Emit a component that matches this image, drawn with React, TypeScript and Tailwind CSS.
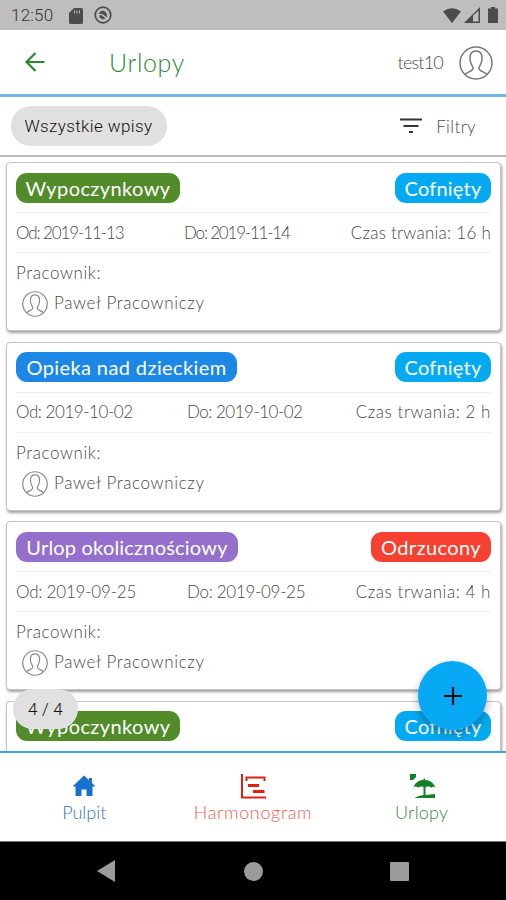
import React from 'react';
import clsx from 'clsx';

interface Leave {
  type: string;
  typeClass: string;
  status: string;
  statusClass: string;
  from: string;
  to: string;
  fromClass: string;
  toClass: string;
  hours: number;
  hoursClass: string;
  employee: string;
}

const leaves: Leave[] = [
  {
    type: 'Wypoczynkowy',
    typeClass: 'w-[164px] bg-[#528b2a] tracking-[0.4px]',
    status: 'Cofnięty',
    statusClass: 'w-24 bg-[#04aaf1] tracking-[0.2px]',
    from: '2019-11-13',
    to: '2019-11-14',
    fromClass: 'w-[168px] tracking-[-1.1px]',
    toClass: 'tracking-[-1.2px]',
    hours: 16,
    hoursClass: 'tracking-[0.25px]',
    employee: 'Paweł Pracowniczy',
  },
  {
    type: 'Opieka nad dzieckiem',
    typeClass: 'w-[221px] bg-[#1c87e5] tracking-[0.4px]',
    status: 'Cofnięty',
    statusClass: 'w-24 bg-[#04aaf1] tracking-[0.2px]',
    from: '2019-10-02',
    to: '2019-10-02',
    fromClass: 'w-[171px] tracking-[-0.45px]',
    toClass: 'tracking-[-0.5px]',
    hours: 2,
    hoursClass: 'tracking-[0.55px]',
    employee: 'Paweł Pracowniczy',
  },
  {
    type: 'Urlop okolicznościowy',
    typeClass: 'w-[222px] bg-[#9470cc] tracking-[0.2px]',
    status: 'Odrzucony',
    statusClass: 'w-[120px] bg-[#f54032] tracking-[0.4px]',
    from: '2019-09-25',
    to: '2019-09-25',
    fromClass: 'w-[171px] tracking-[-0.2px]',
    toClass: 'tracking-[-0.3px]',
    hours: 4,
    hoursClass: 'tracking-[0.55px]',
    employee: 'Paweł Pracowniczy',
  },
];

// Only the header row of this one is in view above the bottom navigation
const nextLeave = leaves[0];

const Avatar: React.FC<{ className?: string }> = ({ className }) => (
  <svg viewBox="0 0 34 34" fill="none" stroke="currentColor" strokeWidth="1.5" className={className}>
    <circle cx="17" cy="17" r="16" />
    <path d="M6 28.500c1-1.500 3-2.300 5.200-3.200 2-.8 2.800-1.500 2.800-3.300 0-1-.4-1.500-1.100-2.700-1.300-2-1.900-4.300-1.900-7.300 0-4.500 2.200-7 6-7s6 2.500 6 7c0 3-.6 5.300-1.900 7.300-.7 1.200-1.100 1.700-1.100 2.700 0 1.800.8 2.500 2.800 3.300 2.200.9 4.200 1.700 5.200 3.200" />
  </svg>
);

const StatusBar: React.FC = () => (
  <div className="flex h-[30px] shrink-0 items-center bg-[#bebebe] pl-[11px] pr-2 text-[#4c4c4c]">
    <span className="w-[58px] pt-[2px] font-[Roboto] text-[17px] font-light tracking-[0.2px] text-[#333]">12:50</span>
    <svg viewBox="0 0 14 16" className="mt-px h-4 w-3.5" fill="currentColor">
      <path d="M5 0h7.500Q14 0 14 1.500v13q0 1.500-1.500 1.500h-11Q0 16 0 14.500V5z" />
      <path d="M5.500 2.500v3M8 2.500v3M10.500 2.500v3" stroke="#bebebe" strokeWidth="1" />
    </svg>
    <svg viewBox="0 0 18 18" className="ml-[11px] h-[18px] w-[18px]" fill="none" stroke="currentColor">
      <circle cx="9" cy="9" r="7.800" strokeWidth="1.700" />
      <path d="M4.800 7.500C6 4.500 9.500 4 11.500 6c1.500 1.500 1.800 3.500 1.300 5.500L9 8.300zM5 9.800l2.500-.8 4 3.800C9 14 6 13 5 9.800z" fill="currentColor" stroke="none" />
    </svg>
    <svg viewBox="0 0 18 15" className="ml-auto h-[15px] w-[18px]" fill="currentColor">
      <path d="M0 3.500Q9-3 18 3.500L9 15z" />
    </svg>
    <svg viewBox="0 0 16 16" className="ml-[3px] h-4 w-4" fill="currentColor">
      <path fillRule="evenodd" d="M0 16 16 0v16zM9 8.800v5.700h5.500V3.500z" />
    </svg>
    <svg viewBox="0 0 10 16" className="ml-[8px] h-4 w-2.5" fill="currentColor">
      <path d="M3 0h4v1.500h3V16H0V1.500h3z" />
    </svg>
  </div>
);

const LeaveHeader: React.FC<{ leave: Leave }> = ({ leave }) => (
  <div className="flex h-[50px] shrink-0 items-center justify-between border-b border-[#eeeeee] text-[20px] text-white">
    <span className={clsx('flex h-[30px] items-center justify-center whitespace-nowrap rounded-[11px]', leave.typeClass)}>
      {leave.type}
    </span>
    <span className={clsx('flex h-[30px] items-center justify-center whitespace-nowrap rounded-[11px]', leave.statusClass)}>
      {leave.status}
    </span>
  </div>
);

const cardClass = 'shrink-0 border-[#c4c4c4] bg-white px-[9px] shadow-[1px_2px_3px_rgba(0,0,0,0.38)]';

const LeaveCard: React.FC<{ leave: Leave }> = ({ leave }) => (
  <div className={clsx('h-[169px] rounded-[4px] border', cardClass)}>
    <LeaveHeader leave={leave} />
    <div className="flex h-10 items-center whitespace-nowrap border-b border-[#f0f0f0] text-[17px] font-light text-[#4a4a4a]">
      <span className={leave.fromClass}>Od: {leave.from}</span>
      <span className={leave.toClass}>Do: {leave.to}</span>
      <span className={clsx('ml-auto', leave.hoursClass)}>Czas trwania: {leave.hours} h</span>
    </div>
    <div className="pt-2 text-[17px] font-light text-[#4a4a4a]">
      <p className="leading-6 tracking-[0.6px]">Pracownik:</p>
      <div className="mt-1.5 flex h-6 items-center gap-[6px] pl-[6px]">
        <Avatar className="mt-0.5 h-[26px] w-[26px] text-[#888]" />
        <span className="tracking-[0.65px]">{leave.employee}</span>
      </div>
    </div>
  </div>
);

const BottomNav: React.FC = () => (
  <nav className="flex h-[90px] shrink-0 border-t-2 border-[#3da5da] bg-white pt-[21px] text-[18px] font-light leading-6">
    <div className="flex flex-1 flex-col items-center text-[#3472cb]">
      <svg viewBox="0 0 24 26" className="h-[26px] w-6" fill="#1871cc">
        <path d="M12 1.500 .5 12.500H3.500V22H9.500v-6.500h5V22h6v-9.500h3L20 9V4h-3v2z" />
      </svg>
      <span>Pulpit</span>
    </div>
    <div className="flex flex-1 flex-col items-center text-[#f1604f]">
      <svg viewBox="0 0 26 26" className="h-[26px] w-[26px]" fill="none" stroke="#df2015">
        <path d="M2 0v23.500H26M6.500 7V3.500h18V7" strokeWidth="2" />
        <path d="M8 11.500h11M13 17.500h11.500" strokeWidth="2.800" />
      </svg>
      <span className="tracking-[0.65px]">Harmonogram</span>
    </div>
    <div className="flex flex-1 flex-col items-center text-[#3b8a41]">
      <svg viewBox="0 0 28 26" className="ml-0.5 h-[26px] w-7" fill="#118026">
        <path d="M1 0h6v3L4 6H1z" />
        <path d="M4.500 13.500C6 8.500 10 6 14.500 6V4.500H16V6c5 0 9 3.200 10.500 7.800-1.500-1.300-3-1.300-4.300 0-1.500-1.600-3.600-1.800-5.700-.8v8l9.500-1v4H5.500q4-2.600 9-3v-8c-2-.8-3.800-.6-5.200.8-1.500-1.500-3.300-1.700-4.800-.3z" />
      </svg>
      <span className="tracking-[0.2px]">Urlopy</span>
    </div>
  </nav>
);

export default function App() {
  return (
    <div className="relative flex h-[900px] w-[506px] flex-col overflow-hidden bg-white font-[Lato,sans-serif]">
      <StatusBar />

      <header className="flex h-[67px] shrink-0 items-center border-b-[3px] border-[#72b3e5] pl-[25px] pr-[13px]">
        <svg viewBox="0 0 20 20" className="h-5 w-5" fill="none" stroke="#238a2d" strokeWidth="2.200">
          <path d="M19.500 10H2M10.500 1 1.500 10l9 9" />
        </svg>
        <h1 className="ml-16 pt-px text-[25px] font-light tracking-[0.6px] text-[#2c8b35]">Urlopy</h1>
        <span className="ml-auto text-[18px] font-light tracking-[-0.8px] text-[#4a4a4a]">test10</span>
        <Avatar className="ml-4 mt-0.5 h-[34px] w-[34px] text-[#777]" />
      </header>

      <div className="flex h-[60px] shrink-0 items-center border-b-2 border-[#bcbcbc] pl-[10.500px] pr-[30px]">
        <button className="h-10 w-[156px] rounded-full bg-[#e0e0e0] pt-0.5 font-[Roboto] text-[17px] font-light tracking-[0.4px] text-[#111]">
          Wszystkie wpisy
        </button>
        <svg viewBox="0 0 22 16" className="ml-auto h-4 w-[22px]" stroke="#333" strokeWidth="2">
          <path d="M0 1.500h22M3.500 8h15M9 14h4" />
        </svg>
        <span className="ml-3.5 pt-px text-[17px] font-light tracking-[0.4px] text-[#4a4a4a]">Filtry</span>
      </div>

      <main className="flex min-h-0 flex-1 flex-col gap-[10.500px] overflow-hidden pl-[6px] pr-[5px] pt-[5px]">
        {leaves.map((leave) => (
          <LeaveCard key={leave.from} leave={leave} />
        ))}
        <div className={clsx('h-[52px] rounded-t-[4px] border border-b-0', cardClass)}>
          <LeaveHeader leave={nextLeave} />
        </div>
      </main>

      <BottomNav />

      {/* Android navigation */}
      <div className="flex h-[59px] shrink-0 items-center border-t border-[#777] bg-black px-[97px] text-[#9b9b9b]">
        <svg viewBox="0 0 18 22" className="h-[22px] w-[18px]" fill="currentColor">
          <path d="M0 11 18 0v22z" />
        </svg>
        <div className="ml-[129px] h-[19px] w-[19px] rounded-full bg-[#9b9b9b]" />
        <div className="ml-auto h-[19px] w-[19px] rounded-[1px] bg-[#9b9b9b]" />
      </div>

      <div className="absolute left-[13px] top-[689px] flex h-10 w-[65px] items-center justify-center rounded-full bg-[#e0e0e0] pt-px font-[Roboto] text-[17px] font-light tracking-[0.2px] text-[#111]">
        4 / 4
      </div>
      <button className="absolute left-[418px] top-[661px] flex h-[69px] w-[69px] items-center justify-center rounded-full bg-[#07a9f5] shadow-[0_4px_8px_rgba(0,0,0,0.3)]">
        <svg viewBox="0 0 18 18" className="h-[18px] w-[18px]" stroke="#111" strokeWidth="2.200">
          <path d="M9 0v18M0 9h18" />
        </svg>
      </button>
    </div>
  );
}
